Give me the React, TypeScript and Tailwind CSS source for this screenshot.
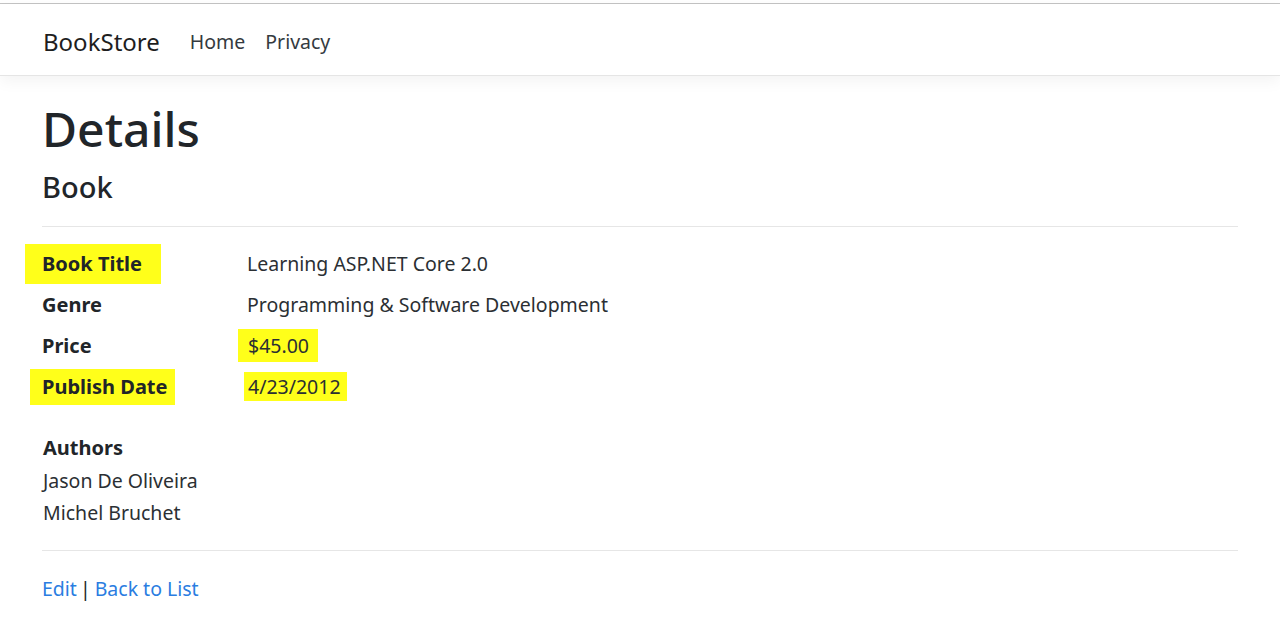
import React from "react";

const font = { fontFamily: '"Noto Sans", "Open Sans", sans-serif' };

function Row({ label, value, labelHl, valueHl }: { label: string; value: string; labelHl?: string; valueHl?: string }) {
  return (
    <div className="flex h-[41px] items-center">
      <div className="w-[205px] shrink-0 text-[20px] font-bold text-[#212529]">
        {labelHl ? <span className={labelHl}>{label}</span> : label}
      </div>
      <div className="text-[19.5px] text-[#2b2f33]">
        {valueHl ? <span className={valueHl}>{value}</span> : value}
      </div>
    </div>
  );
}

export default function App() {
  return (
    <div className="min-h-screen bg-white text-[19.5px] text-[#212529]" style={font}>
      <div className="h-[3px] bg-white" />
      <div className="h-px bg-[#c4c4c4]" />
      <header className="flex h-[72px] items-center border-b border-[#e5e5e5] bg-white px-[43px] pt-[4px] shadow-[0_5px_15px_rgba(0,0,0,0.05)]">
        <span className="mr-[20px] text-[24px] text-[#1e1e1e]">BookStore</span>
        <nav className="flex text-[19.5px]">
          <a className="px-[10px] text-[#343a40]">Home</a>
          <a className="px-[10px] text-[#343a40]">Privacy</a>
        </nav>
      </header>
      <main className="px-[42px]">
        <h1 className="mt-[22px] text-[48px] font-medium leading-[62px] text-[#212529]">Details</h1>
        <h4 className="mt-[9px] text-[29px] font-medium leading-[36px] text-[#212529]">Book</h4>
        <hr className="mt-[21px] border-t border-[#e6e6e6]" />
        <div className="mt-[16px]">
          <Row label="Book Title" value="Learning ASP.NET Core 2.0" labelHl="-ml-[17px] inline-block bg-[#ffff1a] py-[5px] pl-[17px] pr-[19px]" />
          <Row label="Genre" value="Programming & Software Development" />
          <Row label="Price" value="$45.00" valueHl="-ml-[9px] inline-block bg-[#ffff1a] py-[2px] pl-[10px] pr-[9px]" />
          <Row
            label="Publish Date"
            value="4/23/2012"
            labelHl="-ml-[12px] inline-block bg-[#ffff1a] py-[3px] pl-[12px] pr-[8px]"
            valueHl="-ml-[3px] inline-block bg-[#ffff1a] py-0 pl-[4px] pr-[6px]"
          />
        </div>
        <div className="mt-[25px] pl-[1px] leading-[32.5px]">
          <div className="text-[20px] font-bold">Authors</div>
          <div className="text-[#2b2f33]">Jason De Oliveira</div>
          <div className="text-[#2b2f33]">Michel Bruchet</div>
        </div>
        <hr className="mt-[20px] w-[1196px] border-t border-[#e6e6e6]" />
        <div className="mt-[22px] flex leading-[32px]">
          <a className="text-[#2a7de1]">Edit</a>
          <span className="ml-[3px] mr-[4px] text-[#212529]">|</span>
          <a className="text-[#2a7de1]">Back to List</a>
        </div>
      </main>
    </div>
  );
}
